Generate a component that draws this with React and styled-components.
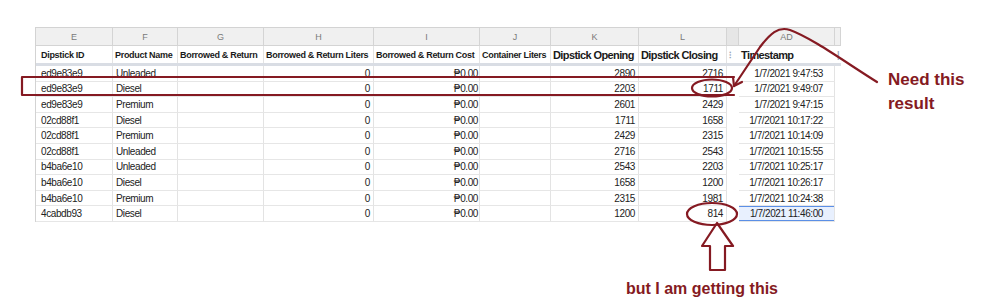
import styled, { createGlobalStyle } from "styled-components";

const GlobalStyle = createGlobalStyle`
  html, body {
    margin: 0;
    padding: 0;
    background: #ffffff;
  }
  body {
    font-family: "Liberation Sans", Arial, sans-serif;
  }
`;

const MAROON = "#851a22";
const COLS = [77, 65, 86, 110, 106, 71, 88, 88, 12, 96, 6];
const LETTERS = ["E", "F", "G", "H", "I", "J", "K", "L", "", "AD", ""];

const rows = [
  ["ed9e83e9", "Unleaded", "2890", "2716", "1/7/2021 9:47:53"],
  ["ed9e83e9", "Diesel", "2203", "1711", "1/7/2021 9:49:07"],
  ["ed9e83e9", "Premium", "2601", "2429", "1/7/2021 9:47:15"],
  ["02cd88f1", "Diesel", "1711", "1658", "1/7/2021 10:17:22"],
  ["02cd88f1", "Premium", "2429", "2315", "1/7/2021 10:14:09"],
  ["02cd88f1", "Unleaded", "2716", "2543", "1/7/2021 10:15:55"],
  ["b4ba6e10", "Unleaded", "2543", "2203", "1/7/2021 10:25:17"],
  ["b4ba6e10", "Diesel", "1658", "1200", "1/7/2021 10:26:17"],
  ["b4ba6e10", "Premium", "2315", "1981", "1/7/2021 10:24:38"],
  ["4cabdb93", "Diesel", "1200", "814", "1/7/2021 11:46:00"],
];

const Page = styled.div`
  position: relative;
  width: 998px;
  height: 305px;
  overflow: hidden;
  background: #fff;
  display: flex;
  flex-direction: column;
`;

const TopRow = styled.div`
  display: flex;
  align-items: flex-start;
`;

const Sheet = styled.div`
  margin: 27px 0 0 35px;
  display: grid;
  grid-template-columns: ${COLS.map((c) => c + "px").join(" ")};
  grid-template-rows: 18px 17px 3px repeat(10, 15.6px);
  border-top: 1px solid #d3d3d3;
  border-left: 1px solid #d3d3d3;
  box-sizing: border-box;
`;

const Letter = styled.div`
  background: ${(p) => (p.$muted ? "#e6e6e6" : "#f0f0f0")};
  border-right: 1px solid #d4d4d4;
  border-bottom: 1px solid #d4d4d4;
  color: #7a7a7a;
  font-size: 9px;
  display: flex;
  align-items: center;
  justify-content: center;
`;

const Label = styled.div`
  display: flex;
  align-items: center;
  padding-left: ${(p) => (p.$first ? 5 : 2)}px;
  border-right: ${(p) => (p.$plain ? "none" : "1px solid #e3e3e3")};
  font-weight: bold;
  color: #1a1a1a;
  font-size: ${(p) => (p.$big ? 11 : 9)}px;
  letter-spacing: ${(p) => (p.$big ? -0.6 : -0.3)}px;
  white-space: nowrap;
  overflow: hidden;
`;

const Handle = styled.span`
  color: #9aa6b8;
  font-size: 9px;
  font-weight: bold;
`;

const Band = styled.div`
  grid-column: 1 / -1;
  background: #d9dde4;
`;

const Cell = styled.div`
  display: flex;
  align-items: center;
  justify-content: ${(p) => (p.$right ? "flex-end" : "flex-start")};
  padding: ${(p) => (p.$first ? "0 0 0 5px" : p.$right ? `0 ${p.$pr ?? 3}px 0 0` : "0 0 0 3px")};
  border-right: ${(p) => (p.$plain ? "none" : "1px solid #e3e3e3")};
  border-bottom: ${(p) => (p.$plain ? "none" : "1px solid #e6e6e6")};
  background: ${(p) => (p.$selected ? "#e8f0fe" : "#fff")};
  box-shadow: ${(p) => (p.$selected ? "inset 0 1px 0 #5b8fe6, inset 0 -1px 0 #5b8fe6" : "none")};
  font-size: 10px;
  letter-spacing: -0.4px;
  color: #222;
  white-space: nowrap;
  overflow: hidden;
`;

const SideNote = styled.div`
  margin: 68px 0 0 47px;
  color: ${MAROON};
  font-size: 17px;
  font-weight: bold;
  line-height: 24px;
`;

const Caption = styled.div`
  margin: 57px 0 0 626px;
  color: ${MAROON};
  font-size: 16px;
  font-weight: bold;
  line-height: 20px;
  white-space: nowrap;
`;

const Overlay = styled.svg`
  position: absolute;
  left: 0;
  top: 0;
  pointer-events: none;
`;

const Annotations = () => (
  <Overlay width="998" height="305" viewBox="0 0 998 305">
    <g fill="none" stroke={MAROON} strokeWidth="2.2" strokeLinejoin="round" strokeLinecap="round">
      <polyline points="734,77 22,77 22,95 734,95" />
      <ellipse cx="712" cy="88" rx="20" ry="8.5" />
      <ellipse cx="712" cy="214" rx="25" ry="11" />
      <path d="M717 223 L733 246 L725 246 L725 270 L710 270 L710 246 L702 246 Z" />
      <path d="M877 82 C845 62 812 38 790 30 C778 26 770 34 760 47 L734 86" />
      <path d="M734 86 L733 77 M734 86 L742 82" />
    </g>
  </Overlay>
);

const App = () => {
  const labels = [
    { t: "Dipstick  ID", first: true },
    { t: "Product Name" },
    { t: "Borrowed & Return" },
    { t: "Borrowed & Return Liters" },
    { t: "Borrowed & Return Cost" },
    { t: "Container Liters" },
    { t: "Dipstick Opening", big: true },
    { t: "Dipstick Closing", big: true },
  ];

  return (
    <>
      <GlobalStyle />
      <Page>
        <TopRow>
          <Sheet>
            {LETTERS.map((l, i) => (
              <Letter key={"l" + i} $muted={i === 8}>
                {l}
              </Letter>
            ))}
            {labels.map((l, i) => (
              <Label key={"h" + i} $first={l.first} $big={l.big}>
                {l.t}
              </Label>
            ))}
            <Label $plain>
              <Handle>⁝</Handle>
            </Label>
            <Label $big $plain>
              Timestamp
            </Label>
            <Label $plain>
              <Handle>|</Handle>
            </Label>
            <Band />
            {rows.map((r, i) => {
              const last = i === rows.length - 1;
              return [
                <Cell key={i + "a"} $first>{r[0]}</Cell>,
                <Cell key={i + "b"}>{r[1]}</Cell>,
                <Cell key={i + "c"} />,
                <Cell key={i + "d"} $right>0</Cell>,
                <Cell key={i + "e"} $right $pr={1}>₱0.00</Cell>,
                <Cell key={i + "f"} />,
                <Cell key={i + "g"} $right>{r[2]}</Cell>,
                <Cell key={i + "h"} $right>{r[3]}</Cell>,
                <Cell key={i + "i"} $plain />,
                <Cell key={i + "j"} $right $pr={11} $selected={last}>
                  {r[4]}
                </Cell>,
                <Cell key={i + "k"} $plain />,
              ];
            })}
          </Sheet>
          <SideNote>
            Need this
            <br />
            result
          </SideNote>
        </TopRow>
        <Caption>but I am getting this</Caption>
        <Annotations />
      </Page>
    </>
  );
};

export default App;
